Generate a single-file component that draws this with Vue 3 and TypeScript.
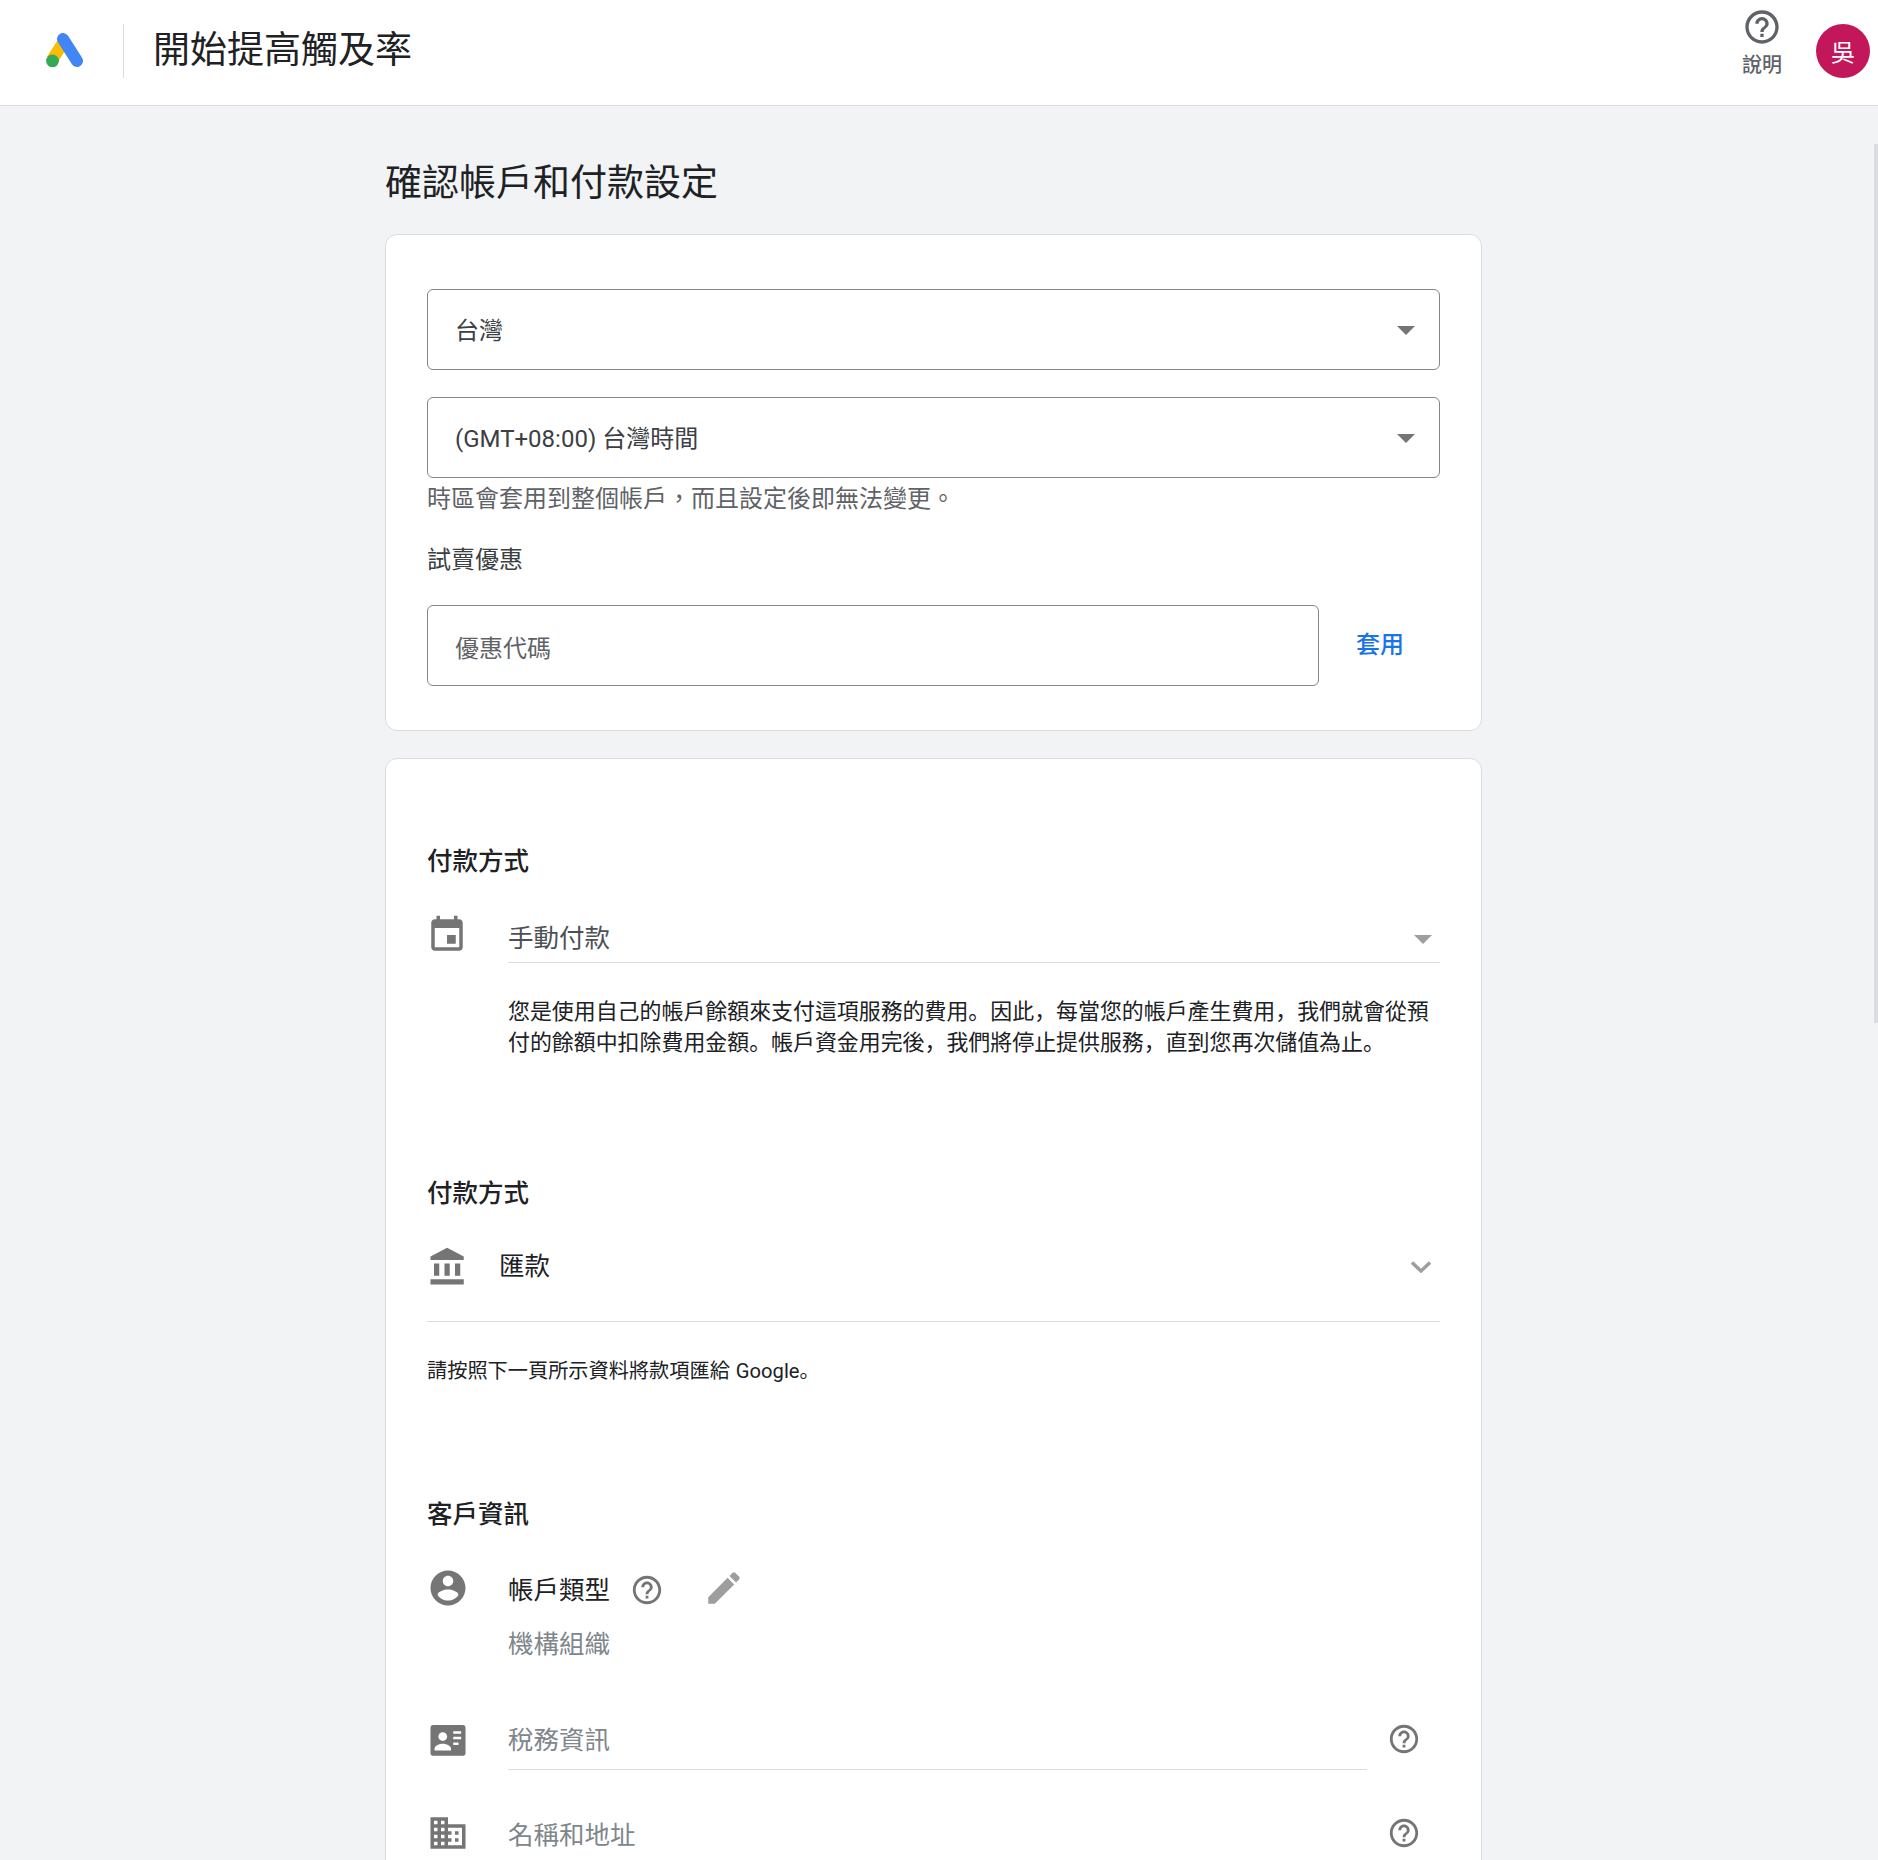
<template>
  <div class="page">
    <header class="topbar">
      <svg class="logo" viewBox="46 33 38 34" width="38" height="34">
        <line x1="63" y1="43" x2="52" y2="60" stroke="#fbbc04" stroke-width="12" />
        <line x1="63" y1="39" x2="77" y2="61" stroke="#4285f4" stroke-width="12" stroke-linecap="round" />
        <circle cx="52.5" cy="61" r="6.4" fill="#34a853" />
      </svg>
      <div class="topbar-divider"></div>
      <div class="topbar-title">開始提高觸及率</div>
      <div class="help-link">
        <svg class="icon" viewBox="0 0 24 24" width="40" height="40"><path :d="icons.help" /></svg>
        <span>說明</span>
      </div>
      <div class="avatar">吳</div>
    </header>

    <main class="content">
      <h1 class="page-title">確認帳戶和付款設定</h1>

      <section class="card card-settings">
        <div class="select">
          <span>台灣</span>
          <i class="caret"></i>
        </div>
        <div class="select select-second">
          <span>(GMT+08:00) 台灣時間</span>
          <i class="caret"></i>
        </div>
        <div class="hint">時區會套用到整個帳戶，而且設定後即無法變更。</div>
        <div class="promo-label">試賣優惠</div>
        <div class="promo-row">
          <div class="select promo-input"><span>優惠代碼</span></div>
          <a class="apply">套用</a>
        </div>
      </section>

      <section class="card card-billing">
        <h2 class="heading">付款方式</h2>
        <div class="row pay-row">
          <svg class="icon row-icon" viewBox="0 0 24 24" width="42" height="42"><path :d="icons.event" /></svg>
          <div class="field">
            <span>手動付款</span>
            <i class="caret caret-light"></i>
          </div>
        </div>
        <p class="pay-desc">您是使用自己的帳戶餘額來支付這項服務的費用。因此，每當您的帳戶產生費用，我們就會從預付的餘額中扣除費用金額。帳戶資金用完後，我們將停止提供服務，直到您再次儲值為止。</p>

        <h2 class="heading heading-second">付款方式</h2>
        <div class="row bank-row">
          <svg class="icon row-icon" viewBox="0 0 24 24" width="42" height="42"><path :d="icons.bank" /></svg>
          <span class="bank-name">匯款</span>
          <svg class="chevron" viewBox="0 0 20 12" width="20" height="12">
            <polyline points="1,1.5 10,10 19,1.5" fill="none" stroke="#9e9e9e" stroke-width="3.4" />
          </svg>
        </div>
        <div class="bank-divider"></div>
        <p class="bank-note">請按照下一頁所示資料將款項匯給 Google。</p>

        <h2 class="heading heading-third">客戶資訊</h2>
        <div class="row account-row">
          <svg class="icon row-icon" viewBox="0 0 24 24" width="42" height="42"><path :d="icons.account" /></svg>
          <span class="account-label">帳戶類型</span>
          <svg class="icon account-help" viewBox="0 0 24 24" width="34" height="34"><path :d="icons.help" /></svg>
          <svg class="icon pencil" viewBox="0 0 24 24" width="42" height="42"><path :d="icons.pencil" /></svg>
        </div>
        <div class="account-value">機構組織</div>

        <div class="row tax-row">
          <svg class="icon row-icon" viewBox="0 0 24 24" width="42" height="42">
            <rect x="2" y="3.4" width="20" height="17.6" rx="1.6" />
            <circle cx="9" cy="10" r="2.5" fill="#fff" />
            <path d="M4.3 18v-1c0-1.8 3-2.8 4.7-2.8s4.7 1 4.7 2.8v1z" fill="#fff" />
            <path d="M15 7h4.5v1.4H15zM15 10.2h4.5v1.4H15zM15 13.4h3v1.4h-3z" fill="#fff" />
          </svg>
          <div class="info-field info-field-line">稅務資訊</div>
          <svg class="icon info-help" viewBox="0 0 24 24" width="34" height="34"><path :d="icons.help" /></svg>
        </div>

        <div class="row name-row">
          <svg class="icon row-icon" viewBox="0 0 24 24" width="42" height="42"><path :d="icons.domain" /></svg>
          <div class="info-field">名稱和地址</div>
          <svg class="icon info-help" viewBox="0 0 24 24" width="34" height="34"><path :d="icons.help" /></svg>
        </div>
      </section>
    </main>

    <div class="scroll-thumb"></div>
  </div>
</template>

<script setup lang="ts">
const icons: Record<string, string> = {
  help: 'M11 18h2v-2h-2v2zm1-16C6.48 2 2 6.48 2 12s4.48 10 10 10 10-4.48 10-10S17.52 2 12 2zm0 18c-4.41 0-8-3.59-8-8s3.59-8 8-8 8 3.59 8 8-3.59 8-8 8zm0-14c-2.21 0-4 1.79-4 4h2c0-1.1.9-2 2-2s2 .9 2 2c0 2-3 1.75-3 5h2c0-2.25 3-2.5 3-5 0-2.21-1.79-4-4-4z',
  event: 'M17 12h-5v5h5v-5zM16 1v2H8V1H6v2H5c-1.11 0-1.99.9-1.99 2L3 19c0 1.1.89 2 2 2h14c1.1 0 2-.9 2-2V5c0-1.1-.9-2-2-2h-1V1h-2zm3 18H5V8h14v11z',
  bank: 'M4 10v7h3v-7H4zm6 0v7h3v-7h-3zM2 22h19v-3H2v3zm14-12v7h3v-7h-3zm-4.5-9L2 6v2h19V6l-9.5-5z',
  account: 'M12 2C6.48 2 2 6.48 2 12s4.48 10 10 10 10-4.48 10-10S17.52 2 12 2zm0 3c1.66 0 3 1.34 3 3s-1.34 3-3 3-3-1.34-3-3 1.34-3 3-3zm0 14.2c-2.5 0-4.71-1.28-6-3.22.03-1.99 4-3.08 6-3.08 1.99 0 5.97 1.09 6 3.08-1.29 1.94-3.5 3.22-6 3.22z',
  pencil: 'M3 17.25V21h3.75L17.81 9.94l-3.75-3.75L3 17.25zM20.71 7.04c.39-.39.39-1.02 0-1.41l-2.34-2.34c-.39-.39-1.02-.39-1.41 0l-1.83 1.83 3.75 3.75 1.83-1.83z',
  domain: 'M12 7V3H2v18h20V7H12zM6 19H4v-2h2v2zm0-4H4v-2h2v2zm0-4H4V9h2v2zm0-4H4V5h2v2zm4 12H8v-2h2v2zm0-4H8v-2h2v2zm0-4H8V9h2v2zm0-4H8V5h2v2zm10 12h-8v-2h2v-2h-2v-2h2v-2h-2V9h8v10zm-2-8h-2v2h2v-2zm0 4h-2v2h2v-2z'
};
</script>

<style>
html,
body {
  margin: 0;
  background: #f1f3f4;
}
</style>

<style scoped>
.page {
  position: relative;
  height: 1860px;
  overflow: hidden;
  background: #f1f3f4;
  color: #202124;
  font-family: Roboto, "Noto Sans CJK TC", sans-serif;
}

.topbar {
  display: flex;
  align-items: center;
  box-sizing: border-box;
  height: 106px;
  padding: 0 8px 0 46px;
  background: #fff;
  border-bottom: 1px solid #dadce0;
}

.logo {
  flex: none;
  margin-top: -5px;
}

.topbar-divider {
  width: 1px;
  height: 54px;
  margin: -3px 0 0 39px;
  background: #dadce0;
}

.topbar-title {
  flex: 1;
  margin: -3px 0 0 29px;
  font-size: 37px;
  line-height: 48px;
}

.help-link {
  display: flex;
  flex-direction: column;
  align-items: center;
  align-self: flex-start;
  margin: 7px 34px 0 0;
  color: #5f6368;
  font-size: 20px;
  font-weight: 500;
  line-height: 28px;
}

.help-link .icon {
  fill: #5f6368;
  margin-bottom: 4px;
}

.avatar {
  display: flex;
  align-items: center;
  justify-content: center;
  box-sizing: border-box;
  width: 54px;
  height: 54px;
  margin-top: -3px;
  padding-bottom: 2px;
  border-radius: 50%;
  background: #c2185b;
  color: #fff;
  font-size: 24px;
}

.content {
  width: 1097px;
  margin-left: 385px;
}

.page-title {
  margin: 56px 0 28px;
  font-size: 37px;
  font-weight: 400;
  line-height: 44px;
}

.card {
  box-sizing: border-box;
  background: #fff;
  border: 1px solid #dadce0;
  border-radius: 12px;
  padding-left: 41px;
  padding-right: 41px;
}

.card-settings {
  padding-top: 54px;
  padding-bottom: 44px;
}

.card-billing {
  margin-top: 27px;
  padding-top: 84px;
  padding-bottom: 60px;
}

.select {
  display: flex;
  align-items: center;
  justify-content: space-between;
  box-sizing: border-box;
  height: 81px;
  padding: 0 24px 0 27px;
  border: 1px solid #80868b;
  border-radius: 6px;
  color: #3c4043;
  font-size: 24px;
}

.select > span {
  margin-top: -3px;
}

.select-second {
  margin-top: 27px;
}

.caret {
  flex: none;
  width: 0;
  height: 0;
  margin-top: 2px;
  border-left: 9px solid transparent;
  border-right: 9px solid transparent;
  border-top: 9px solid #757575;
}

.caret-light {
  border-top-color: #9e9e9e;
  margin: 8px 8px 0 0;
}

.hint {
  color: #5f6368;
  font-size: 24px;
  line-height: 42px;
}

.promo-label {
  margin-top: 22px;
  color: #3c4043;
  font-size: 24px;
  line-height: 36px;
}

.promo-row {
  display: flex;
  align-items: center;
  margin-top: 27px;
}

.promo-input {
  width: 892px;
  color: #5f6368;
}

.promo-input > span {
  margin-top: 1px;
}

.apply {
  margin: -6px 0 0 37px;
  color: #1a73e8;
  font-size: 24px;
  font-weight: 500;
}

.heading {
  margin: 0;
  font-size: 25.5px;
  font-weight: 500;
  line-height: 36px;
}

.heading-second {
  margin-top: 117px;
}

.heading-third {
  margin-top: 110px;
}

.row {
  display: flex;
  align-items: flex-start;
}

.icon {
  flex: none;
  display: block;
  fill: #757575;
}

.row-icon {
  margin: 0 39.5px 0 -0.5px;
}

.pay-row {
  margin-top: 35px;
}

.pay-row .row-icon {
  margin: 0 40px 0 -1px;
}

.field {
  flex: 1;
  display: flex;
  align-items: center;
  justify-content: space-between;
  box-sizing: content-box;
  height: 43px;
  padding-bottom: 5px;
  border-bottom: 1px solid #dadce0;
  color: #4d5156;
  font-size: 25.5px;
}

.pay-desc {
  width: 932px;
  margin: 33px 0 0 81px;
  color: #202124;
  font-family: Roboto, "Noto Sans CJK JP", sans-serif;
  font-size: 21.93px;
  line-height: 31px;
}

.bank-row {
  align-items: center;
  height: 42px;
  margin-top: 34px;
}

.bank-row .row-icon {
  margin: 2px 30px 0 0;
}

.bank-name {
  flex: 1;
  margin-top: -6px;
  color: #202124;
  font-size: 25.5px;
}

.chevron {
  flex: none;
  margin: 2px 9px 0 0;
}

.bank-divider {
  height: 1px;
  margin-top: 34px;
  background: #dadce0;
}

.bank-note {
  margin: 34px 0 0;
  color: #202124;
  font-family: Roboto, "Noto Sans CJK JP", sans-serif;
  font-size: 20.2px;
  line-height: 30px;
  word-spacing: 1px;
}

.account-row {
  margin-top: 35px;
}

.account-label {
  font-size: 25.5px;
  line-height: 46px;
}

.account-help {
  margin: 6px 0 0 20px;
}

.pencil {
  margin-left: 39px;
  fill: #9e9e9e;
}

.account-value {
  margin: 8px 0 0 81px;
  color: #80868b;
  font-size: 25.5px;
  line-height: 46px;
}

.tax-row {
  margin-top: 50px;
}

.tax-row .row-icon {
  margin-top: 2px;
}

.name-row {
  margin-top: 42px;
}

.info-field {
  flex: none;
  box-sizing: border-box;
  width: 859px;
  color: #80868b;
  font-size: 25.5px;
  line-height: 46px;
}

.info-field-line {
  height: 53px;
  border-bottom: 1px solid #dadce0;
}

.info-help {
  margin: 5px 0 0 20px;
}

.name-row .info-help {
  margin-top: 4px;
}

.scroll-thumb {
  position: absolute;
  top: 144px;
  right: 0;
  width: 4px;
  height: 879px;
  background: #dadce0;
}
</style>
